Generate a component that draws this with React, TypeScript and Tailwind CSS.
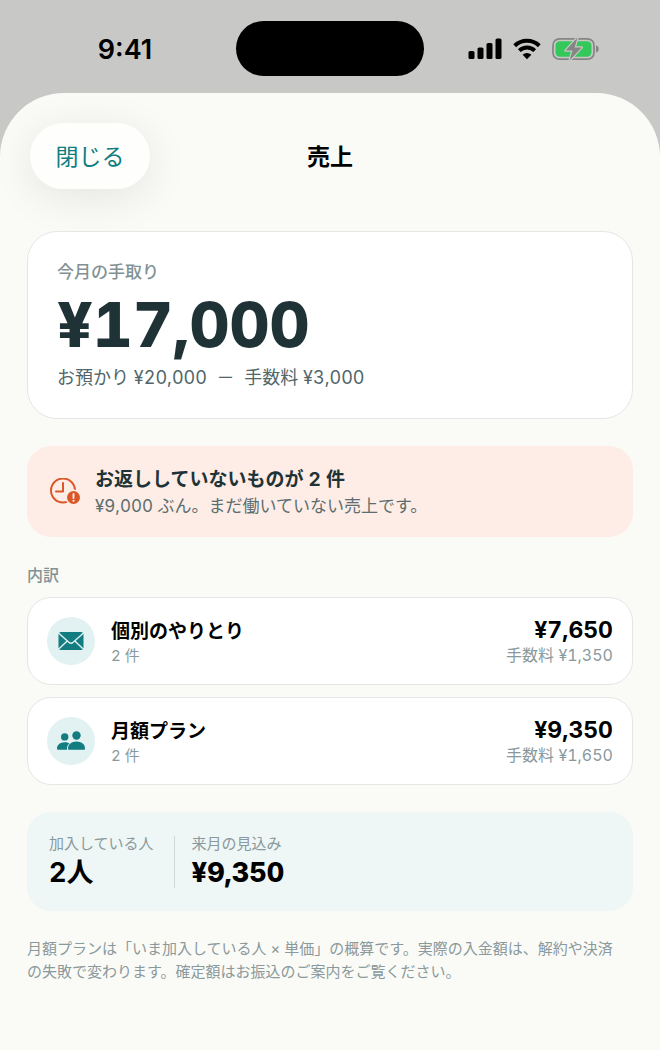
import React from 'react';

type Breakdown = {
  id: string;
  name: string;
  count: string;
  net: string;
  fee: string;
  icon: React.ReactNode;
};

function EnvelopeIcon() {
  return (
    <svg viewBox="0 0 26 20" className="w-[26px] h-5" aria-hidden="true">
      <rect x="0.5" y="1" width="25" height="18" rx="2.5" fill="#127c81" />
      <path d="M0.5 2 10.8 11.2a3.3 3.3 0 0 0 4.4 0L25.5 2" fill="none" stroke="#e2f1f1" strokeWidth="1.4" />
      <path d="M0.5 18.2 9.2 10M25.5 18.2 16.8 10" fill="none" stroke="#e2f1f1" strokeWidth="1.4" />
    </svg>
  );
}

function PeopleIcon() {
  return (
    <svg viewBox="0 0 28 20" className="w-7 h-5" aria-hidden="true">
      <g fill="#127c81">
        <circle cx="7.7" cy="5.9" r="3.7" />
        <path d="M0 17.2C0 14 3.2 11.2 7.6 11.2c2 0 3.6.5 4.8 1.3-1.6 1.4-2.5 3-2.5 4.8 0 .6.1 1 .4 1.5H1.3C.4 18.8 0 18.2 0 17.2Z" />
        <circle cx="19.5" cy="4.5" r="4.2" />
        <path d="M11 17.2c0-3.2 3.3-6.6 8.5-6.6s8.5 3.4 8.5 6.6c0 1-.4 1.6-1.4 1.6H12.4c-1 0-1.4-.6-1.4-1.6Z" />
      </g>
    </svg>
  );
}

function ClockAlertIcon() {
  return (
    <svg viewBox="0 0 32 28" className="w-8 h-7 shrink-0" aria-hidden="true">
      <circle cx="14" cy="12.5" r="12" fill="none" stroke="#da5828" strokeWidth="2" />
      <path d="M14 5v8.5H7" fill="none" stroke="#da5828" strokeWidth="2" strokeLinecap="round" strokeLinejoin="round" />
      <circle cx="24.5" cy="19.5" r="8" fill="#fdede6" />
      <circle cx="24.5" cy="19.5" r="6.5" fill="#da5828" />
      <path d="M24.5 16v4" stroke="#fdede6" strokeWidth="1.9" strokeLinecap="round" />
      <circle cx="24.5" cy="22.8" r="1.1" fill="#fdede6" />
    </svg>
  );
}

function SignalIcon() {
  return (
    <svg viewBox="0 0 34 22" className="w-[34px] h-[22px]" aria-hidden="true">
      <rect x="0.5" y="13" width="6" height="8" rx="1.6" />
      <rect x="9.5" y="9.5" width="6" height="11.5" rx="1.6" />
      <rect x="18.5" y="5" width="6" height="16" rx="1.6" />
      <rect x="27.5" y="0.5" width="6" height="20.5" rx="1.6" />
    </svg>
  );
}

function WifiIcon() {
  return (
    <svg viewBox="0 0 28 22" className="w-7 h-[22px]" aria-hidden="true">
      <path d="M1.7 7.7a17.7 17.7 0 0 1 24.6 0" fill="none" stroke="#000" strokeWidth="4" />
      <path d="M6.3 12.6a11 11 0 0 1 15.4 0" fill="none" stroke="#000" strokeWidth="3.9" />
      <path d="M14 21.2 9.6 16.8a6.2 6.2 0 0 1 8.8 0Z" />
    </svg>
  );
}

function BatteryIcon() {
  return (
    <svg viewBox="0 0 47 24" className="w-[47px] h-6" aria-hidden="true">
      <rect x="1" y="1.8" width="41" height="20.4" rx="6.5" fill="none" stroke="#858585" strokeWidth="1.7" />
      <rect x="3.5" y="4.3" width="36" height="15.4" rx="4.2" fill="#34c759" />
      <path d="M44 8.5c2 .6 2.7 1.8 2.7 3.5s-.7 2.9-2.7 3.5Z" fill="#858585" />
      <path d="M25.5.5 13.5 13.5h7L17.5 23.5 29.7 10.5h-7Z" fill="#858585" stroke="#c8c8c7" strokeWidth="2.4" strokeLinejoin="round" paintOrder="stroke" />
    </svg>
  );
}

const BREAKDOWN: Breakdown[] = [
  { id: 'single', name: '個別のやりとり', count: '2 件', net: '¥7,650', fee: '手数料 ¥1,350', icon: <EnvelopeIcon /> },
  { id: 'monthly', name: '月額プラン', count: '2 件', net: '¥9,350', fee: '手数料 ¥1,650', icon: <PeopleIcon /> },
];

function StatusBar() {
  return (
    <div className="h-[93px] grid grid-cols-3 pt-[21px] items-start text-black select-none">
      <div className="h-[58px] flex items-center justify-center pl-[30px] text-[27px] font-semibold">9:41</div>
      <div className="w-[188px] h-[55px] rounded-full bg-black justify-self-center" />
      <div className="h-[55px] flex items-center justify-end gap-[11px] pr-[61px]">
        <SignalIcon />
        <WifiIcon />
        <BatteryIcon />
      </div>
    </div>
  );
}

function SheetHeader() {
  return (
    <header className="grid grid-cols-[1fr_auto_1fr] items-center px-[30px] pt-[30px]">
      <button
        type="button"
        className="justify-self-start w-[120px] h-[66px] pt-0.5 rounded-full bg-[#fefffc] text-[23px] text-[#127c81] shadow-[0_8px_44px_rgba(0,0,0,0.09)]"
      >
        閉じる
      </button>
      <h1 className="pt-0.5 text-[23px] font-bold text-black">売上</h1>
    </header>
  );
}

function BreakdownRow({ item }: { item: Breakdown }) {
  return (
    <li className="flex items-center gap-4 h-[88px] px-[19px] rounded-3xl bg-white border border-[#e5e7e6]">
      <div className="w-12 h-12 rounded-full bg-[#e2f1f1] flex items-center justify-center shrink-0">{item.icon}</div>
      <div className="flex-1 pt-1">
        <p className="text-[19px] leading-[26px] font-bold text-black">{item.name}</p>
        <p className="text-[15px] leading-[22px] text-[#8a999b]">{item.count}</p>
      </div>
      <div className="pt-0.5 text-right">
        <p className="text-[23px] leading-[26px] font-bold text-black">{item.net}</p>
        <p className="text-[16px] leading-6 text-[#8a999b]">{item.fee}</p>
      </div>
    </li>
  );
}

export default function App() {
  return (
    <div lang="ja" className="min-h-screen flex flex-col bg-[#c8c8c7] font-[Inter,'Noto_Sans_CJK_JP',sans-serif]">
      <StatusBar />

      <div className="flex-1 rounded-t-[64px] bg-[#fafbf7]">
        <SheetHeader />

        <main className="px-[27px] pt-[42px] pb-16 flex flex-col tabular-nums">
          {/* Net for this month */}
          <section className="h-[188px] px-[29px] flex flex-col justify-center rounded-[30px] bg-white border border-[#e5e7e6]">
            <h2 className="text-[17px] leading-6 font-medium text-[#829294]">今月の手取り</h2>
            <p className="text-[62px] leading-[82px] font-extrabold text-[#1f3336]">¥17,000</p>
            <p className="text-[18px] leading-6 text-[#51666a] whitespace-pre">お預かり ¥20,000  －  手数料 ¥3,000</p>
          </section>

          {/* Pending replies */}
          <section className="mt-[27px] h-[91px] px-[22px] flex items-center gap-3.5 rounded-3xl bg-[#fdede6]">
            <ClockAlertIcon />
            <div className="pt-0.5">
              <p className="text-[19px] leading-[26px] font-bold text-[#1f3336]">お返ししていないものが 2 件</p>
              <p className="text-[17px] leading-[26px] text-[#5b6d70]">¥9,000 ぶん。まだ働いていない売上です。</p>
            </div>
          </section>

          <h2 className="mt-[26px] text-[16px] leading-6 font-medium text-[#829294]">内訳</h2>
          <ul className="mt-2.5 flex flex-col gap-3">
            {BREAKDOWN.map((item) => (
              <BreakdownRow key={item.id} item={item} />
            ))}
          </ul>

          {/* Forecast */}
          <section className="mt-[27px] h-[99px] px-[22px] flex items-center rounded-3xl bg-[#eef6f6]">
            <div className="pr-5">
              <p className="text-[15px] leading-[22px] text-[#8a999b]">加入している人</p>
              <p className="text-[27px] leading-9 font-bold text-black">2人</p>
            </div>
            <div className="h-[52px] border-l border-[#d0d9d9]" />
            <div className="pl-[17px]">
              <p className="text-[15px] leading-[22px] text-[#8a999b]">来月の見込み</p>
              <p className="text-[27px] leading-9 font-extrabold text-black">¥9,350</p>
            </div>
          </section>

          <p className="mt-[26px] pr-3 text-[15px] leading-[23px] text-[#8a999b]">
            月額プランは「いま加入している人 × 単価」の概算です。実際の入金額は、解約や決済の失敗で変わります。確定額はお振込のご案内をご覧ください。
          </p>
        </main>
      </div>
    </div>
  );
}
